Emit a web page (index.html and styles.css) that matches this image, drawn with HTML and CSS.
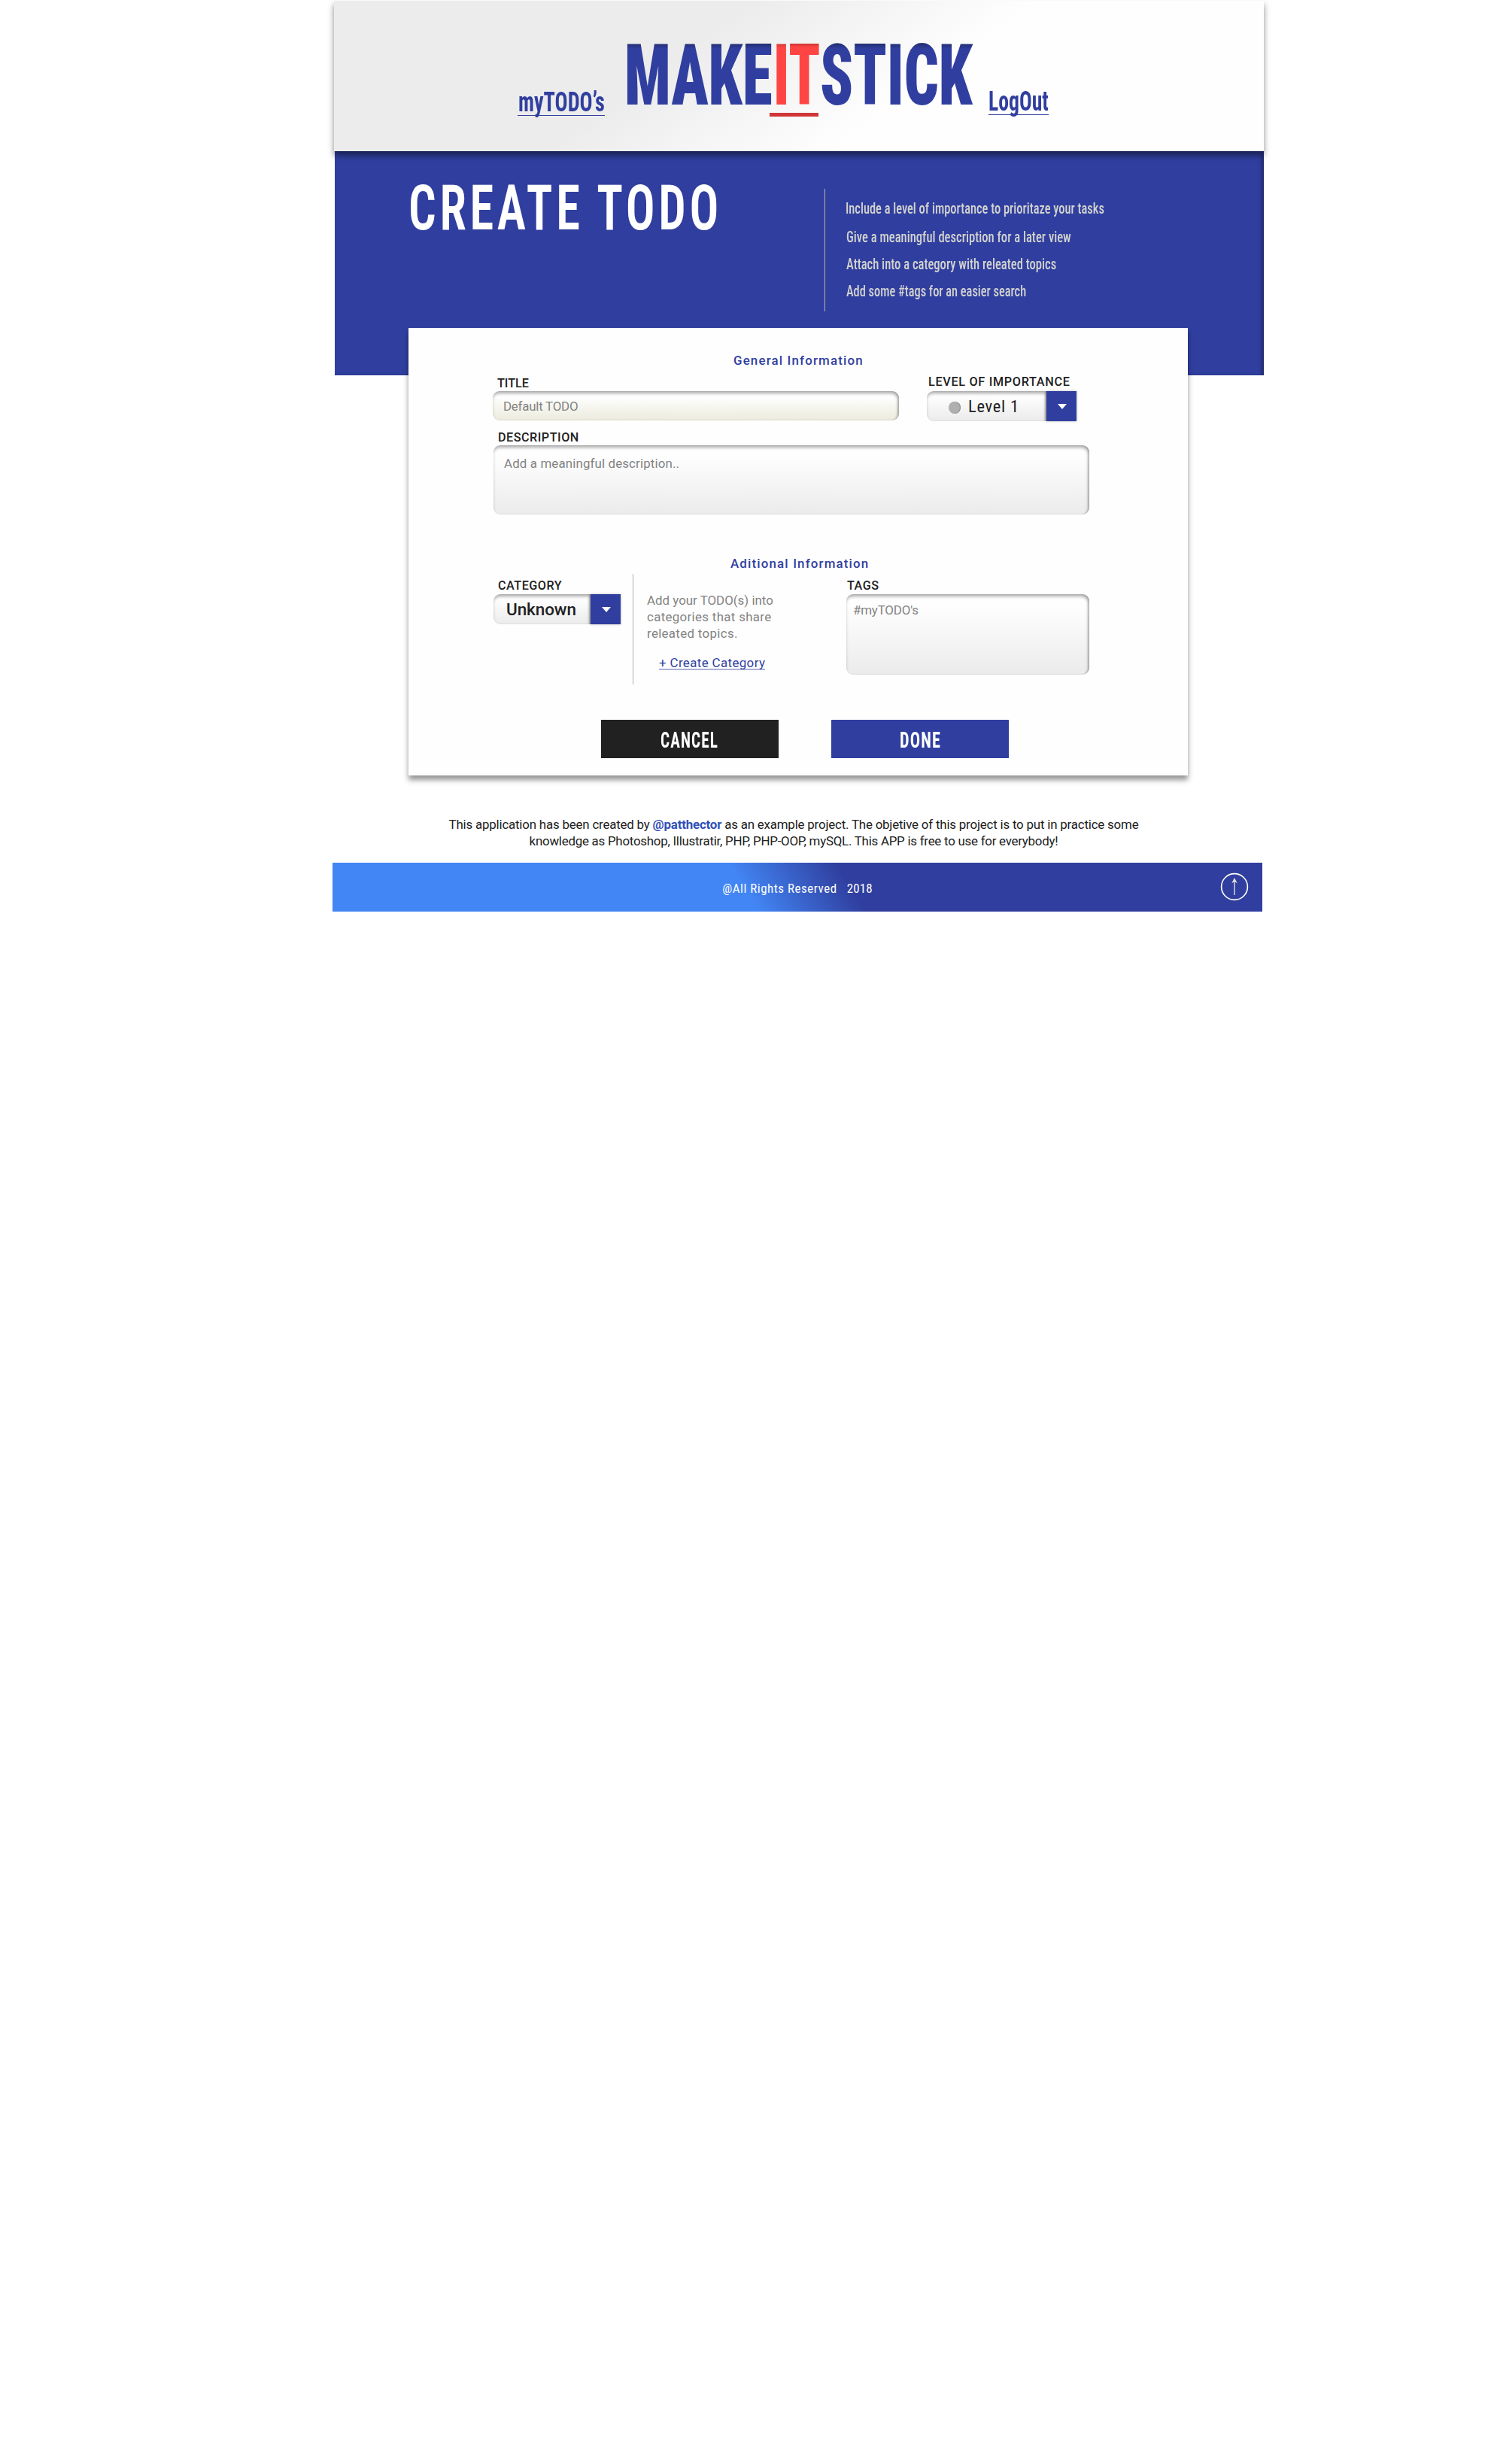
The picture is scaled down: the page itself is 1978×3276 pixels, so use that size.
FILE: index.html
```html
<!DOCTYPE html>
<html lang="en">
<head>
<meta charset="utf-8">
<title>MakeItStick - Create TODO</title>
<link rel="stylesheet" href="styles.css">
</head>
<body>
<div class="page">
  <header class="topbar">
    <a class="nav nav-todos" href="#"><span>myTODO’s</span></a>
    <div class="logo">
      <span class="logo-part logo-make"><span>MAKE</span></span>
      <span class="logo-part logo-it"><span>IT</span></span>
      <span class="logo-part logo-stick"><span>STICK</span></span>
    </div>
    <a class="nav nav-logout" href="#"><span>LogOut</span></a>
  </header>

  <section class="hero">
    <h1 class="hero-title"><span>CREATE TODO</span></h1>
    <ul class="tips">
      <li class="tip-level"><span>Include a level of importance to prioritaze your tasks</span></li>
      <li><span>Give a meaningful description for a later view</span></li>
      <li><span>Attach into a category with releated topics</span></li>
      <li class="tip-tags"><span>Add some #tags for an easier search</span></li>
    </ul>
  </section>

  <main class="card">
    <h2 class="section-title">General Information</h2>
    <div class="row">
      <div class="field field-title">
        <label class="label">TITLE</label>
        <div class="box box-title">Default TODO</div>
      </div>
      <div class="field field-level">
        <label class="label">LEVEL OF IMPORTANCE</label>
        <div class="select">
          <div class="box select-value level-value"><i class="dot"></i>Level 1</div>
          <button class="select-button" type="button" aria-label="Choose level"><svg width="12" height="7" viewBox="0 0 12 7"><path d="M0 0H12L6 7Z" fill="#fff"/></svg></button>
        </div>
      </div>
    </div>
    <div class="field field-description">
      <label class="label">DESCRIPTION</label>
      <div class="box box-description">Add a meaningful description..</div>
    </div>

    <h2 class="section-title section-extra">Aditional Information</h2>
    <div class="row row-extra">
      <div class="field field-category">
        <label class="label">CATEGORY</label>
        <div class="select">
          <div class="box select-value category-value">Unknown</div>
          <button class="select-button" type="button" aria-label="Choose category"><svg width="12" height="7" viewBox="0 0 12 7"><path d="M0 0H12L6 7Z" fill="#fff"/></svg></button>
        </div>
      </div>
      <div class="help">
        <p class="help-text">Add your TODO(s) into<br><span class="help-wide">categories that share</span><br><span class="help-wide">releated topics.</span></p>
        <a class="help-link" href="#">+ Create Category</a>
      </div>
      <div class="field field-tags">
        <label class="label">TAGS</label>
        <div class="box box-tags">#myTODO's</div>
      </div>
    </div>

    <div class="actions">
      <button class="button button-cancel" type="button"><span>CANCEL</span></button>
      <button class="button button-done" type="button"><span>DONE</span></button>
    </div>
  </main>

  <p class="about">This application has been created by <a href="#">@patthector</a> as an example project. The objetive of this project is to put in practice some<br><span class="about-end">knowledge as Photoshop, Illustratir, PHP, PHP-OOP, mySQL. This APP is free to use for everybody!</span></p>

  <footer class="footer">
    <p class="copyright">@All Rights Reserved<span class="year">2018</span></p>
    <a class="to-top" href="#" aria-label="Back to top">
      <svg width="38" height="38" viewBox="0 0 38 38"><circle cx="19" cy="19" r="17.4" fill="none" stroke="#fff" stroke-width="1.6"/><path d="M19 30V12" stroke="#ddd" stroke-width="1.4"/><path d="M19 7L22.6 14L19 12.4L15.4 14Z" fill="#ddd"/></svg>
    </a>
  </footer>
</div>
</body>
</html>
```
FILE: styles.css
```css
* { box-sizing: border-box; }
body { margin: 0; background: #fff; color: #212121; font-family: Roboto, "Open Sans", sans-serif; }
h1, h2, p, ul { margin: 0; padding: 0; font-weight: inherit; }
a { color: inherit; text-decoration: none; }
button { border: 0; padding: 0; font: inherit; color: #fff; }

.page { width: 1236px; margin-left: 444px; }

/* Condensed display lettering */
.nav, .logo, .hero, .button, .copyright, .level-value { font-family: "Roboto Condensed", Roboto, sans-serif; font-stretch: 75%; }
.nav span, .logo-part span, .hero-title span, .tips span, .button span { display: inline-block; transform-origin: 0 50%; white-space: nowrap; }

/* Top bar */
.topbar { position: relative; z-index: 1; display: flex; align-items: flex-start; height: 201px; padding-left: 244px; border-top: 1px solid #fafafa; background: linear-gradient(144.5deg, #ececec 37%, #fefefe 62%); box-shadow: 0 6px 8px rgba(0, 0, 0, .45); }
.nav { display: block; height: 38px; border-bottom: 1px solid #303f9f; color: #303f9f; font-size: 36.6px; font-weight: 700; line-height: 40px; }
.nav-todos { width: 116px; margin-top: 115px; padding-left: 1px; }
.nav-todos span { transform: scaleX(.7736); }
.nav-logout { width: 80px; margin: 114px 0 0 20px; }
.nav-logout span { transform: scaleX(.7571); }
.logo { display: flex; margin: 42px 0 0 26px; font-size: 113.9px; font-weight: 900; line-height: 114px; }
.logo-part span { background: linear-gradient(#232e73 15px, #303f9f 22px); background-clip: text; -webkit-background-clip: text; color: transparent; }
.logo-make { width: 198px; }
.logo-make span { transform: scaleX(.7138); }
.logo-it { position: relative; width: 62px; }
.logo-it span { background-image: linear-gradient(#cc3535 15px, #ff4444 20px); transform: scaleX(.6667); }
.logo-it::after { content: ""; position: absolute; left: -5px; top: 107px; width: 65px; height: 5px; background: #d03638; }
.logo-stick { width: 204px; }
.logo-stick span { transform: scaleX(.7073); }

/* Hero */
.hero { display: flex; height: 298px; margin-left: 1px; padding-left: 98px; background: #303f9f; box-shadow: inset -4px 0 4px -1px rgba(0, 0, 0, .35); }
.hero-title { width: 553px; margin-top: 31px; color: #fff; font-size: 83px; font-weight: 600; line-height: 90px; letter-spacing: 6px; }
.hero-title span { transform: scaleX(.777); }
.tips { height: 163px; margin-top: 50px; padding: 8px 0 0 28px; border-left: 1px solid #b5b5a8; color: #d3d3cf; font-size: 21.1px; font-weight: 500; line-height: 36px; list-style: none; }
.tips li { height: 36px; }
.tips span { transform: scaleX(.7875); }
.tips .tip-level { margin: 0 0 2px -1px; }
.tips .tip-level span { transform: scaleX(.78); }
.tips .tip-tags span { transform: scaleX(.776); }

/* Form card */
.card { position: relative; width: 1036px; height: 595px; margin: -63px 0 0 99px; padding: 33px 0 0 112px; background: #fefefe; box-shadow: 0 6px 7px rgba(0, 0, 0, .42); }
.section-title { width: max-content; margin-left: 320px; color: #303f9f; font-size: 16.9px; font-weight: 500; line-height: 20px; letter-spacing: 1.16px; }
.section-extra { margin: 55px 0 0 316px; }
.row { display: flex; margin-top: 11px; }
.label { display: block; padding-left: 6px; font-size: 16.2px; font-weight: 500; line-height: 18px; letter-spacing: .5px; }
.box { margin-top: 2px; border-radius: 9px; background: linear-gradient(#fefefe 15%, #ebebeb); box-shadow: inset -1px 3px 4px rgba(0, 0, 0, .33), inset -2px 0 2px rgba(0, 0, 0, .12); color: #838383; font-size: 16.9px; line-height: 20px; white-space: nowrap; }
.field-title { width: 540px; }
.field-title .label { padding-top: 1px; letter-spacing: 0; }
.field-level { width: 200px; margin: -1px 0 0 37px; }
.field-level .label { padding-left: 2px; letter-spacing: .7px; }
.box-title { height: 39px; margin-top: 1px; padding: 10px 0 0 14px; background: linear-gradient(#fefefe 20%, #ebebdc); letter-spacing: -.23px; }
.select { display: flex; }
.select-value { height: 40px; border-radius: 9px 0 0 9px; color: #212121; font-size: 22.5px; line-height: 40px; }
.field-level .select { margin-top: 1px; }
.level-value { display: flex; width: 159px; padding-left: 29px; letter-spacing: .74px; }
.dot { width: 16px; height: 16px; margin: 14px 10px 0 0; border-radius: 50%; background: #afafaf; box-shadow: inset -1px 0 1px #888; }
.select-button { display: flex; align-items: center; justify-content: center; width: 40px; height: 40px; margin-top: 2px; padding-left: 2px; background: #303f9f; box-shadow: 0 0 3px rgba(0, 0, 0, .3); }
.field-description { margin: 13px 0 0 1px; }
.box-description { width: 792px; height: 92px; margin-top: 1px; padding: 14px 0 0 14px; letter-spacing: .13px; }

.row-extra { margin: 4px 0 0 1px; height: 147px; }
.field-category { width: 169px; padding-top: 7px; }
.category-value { width: 129px; padding-left: 17px; font-weight: 500; letter-spacing: -.08px; }
.help { width: 284px; margin-left: 16px; padding: 24px 0 0 18px; border-left: 1px solid #afafaf; color: #838383; font-size: 16.9px; }
.help-text { line-height: 22px; }
.help-wide { letter-spacing: .32px; }
.help-link { display: block; width: max-content; height: 20px; margin: 18px 0 0 16px; border-bottom: 2px solid #abb1d8; color: #303f9f; line-height: 20px; letter-spacing: .38px; }
.field-tags { width: 323px; padding-top: 7px; }
.field-tags .label { padding-left: 1px; }
.box-tags { height: 107px; padding: 11px 0 0 9px; letter-spacing: -.17px; }

.actions { display: flex; gap: 70px; margin: 47px 0 0 144px; }
.button { width: 236px; height: 51px; padding: 3px 0 0; text-align: left; font-size: 29.5px; font-weight: 700; line-height: 48px; letter-spacing: 1.5px; }
.button-cancel { padding-left: 79px; background: #212121; }
.button-cancel span { transform: scaleX(.7196); }
.button-done { padding-left: 91px; background: #303f9f; }
.button-done span { transform: scaleX(.7534); }

/* Footer */
.about { margin: 54px 14px 0 0; font-size: 16.9px; line-height: 22px; letter-spacing: -.195px; text-align: center; white-space: nowrap; }
.about-end { letter-spacing: -.246px; }
.about a { color: #3050b8; font-weight: 700; }
.footer { display: grid; grid-template-columns: 1fr auto 1fr; align-items: center; height: 65px; margin: 18px 2px 0 -2px; padding: 0 18px; background: linear-gradient(57.8deg, #4285f4 44.5%, #303f9f 55.5%); color: #fff; }
.copyright { grid-column: 2; padding-top: 3px; font-size: 16.9px; line-height: 20px; letter-spacing: .55px; }
.year { margin-left: 13px; letter-spacing: .2px; }
.to-top { justify-self: end; height: 38px; margin-bottom: 1px; }
```
